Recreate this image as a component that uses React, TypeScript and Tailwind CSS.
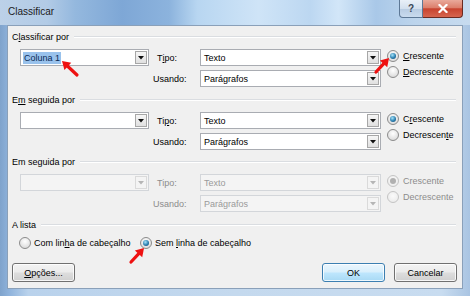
import React from "react";

function Arrow({ x1, y1, x2, y2 }: { x1: number; y1: number; x2: number; y2: number }) {
  const dx = x2 - x1;
  const dy = y2 - y1;
  const len = Math.sqrt(dx * dx + dy * dy);
  const ux = dx / len;
  const uy = dy / len;
  const hl = 8;
  const hw = 5;
  const bx = x2 - ux * hl;
  const by = y2 - uy * hl;
  const px = -uy;
  const py = ux;
  const pts = `${x2},${y2} ${bx + px * hw},${by + py * hw} ${bx - px * hw},${by - py * hw}`;
  return (
    <g>
      <line x1={x1} y1={y1} x2={bx + ux} y2={by + uy} stroke="#ee1111" strokeWidth={3.2} strokeLinecap="round" />
      <polygon points={pts} fill="#ee1111" />
    </g>
  );
}

function DropBtn({ disabled }: { disabled?: boolean }) {
  return (
    <div
      className={
        "w-[12px] my-[1px] mr-[1px] flex items-center justify-center border " +
        (disabled
          ? "border-[#dadada] bg-[#f4f4f4]"
          : "border-[#a7a7a7] bg-[linear-gradient(180deg,#f6f6f6,#e0e0e0)]")
      }
    >
      <svg width="6" height="4" viewBox="0 0 6 4">
        <polygon points="0,0 6,0 3,3.5" fill={disabled ? "#b5b5b5" : "#111"} />
      </svg>
    </div>
  );
}

function Combo({
  className,
  text,
  sel,
  disabled,
}: {
  className: string;
  text?: string;
  sel?: boolean;
  disabled?: boolean;
}) {
  return (
    <div
      className={
        "flex h-[17px] border " +
        (disabled ? "border-[#d3d6da] bg-[#f4f4f4] " : "border-[#a9acb2] bg-white ") +
        className
      }
    >
      <div className="flex-1 flex items-center pl-[2px] overflow-hidden">
        {text ? (
          sel ? (
            <span className="bg-[#99c2ec] text-[#0b2a55] px-[1px] leading-[12px]">{text}</span>
          ) : (
            <span className={"pl-[1px] " + (disabled ? "text-[#9a9a9a]" : "text-black")}>{text}</span>
          )
        ) : null}
      </div>
      <DropBtn disabled={disabled} />
    </div>
  );
}

function Radio({ checked, disabled }: { checked?: boolean; disabled?: boolean }) {
  return (
    <span
      className={
        "w-[12px] h-[12px] rounded-full border flex items-center justify-center shrink-0 " +
        (disabled
          ? "border-[#c4c4c4] bg-[radial-gradient(circle_at_50%_40%,#fafafa,#e8e8e8)]"
          : "border-[#8b8b8b] bg-[radial-gradient(circle_at_50%_35%,#ffffff,#d2d2d2)]")
      }
    >
      {checked ? (
        disabled ? (
          <span className="w-[6px] h-[6px] rounded-full bg-[#b0b0b0]" />
        ) : (
          <span className="w-[6px] h-[6px] rounded-full bg-[radial-gradient(circle_at_40%_35%,#a6e4fa,#2a7fb0_55%,#0d3f66)]" />
        )
      ) : null}
    </span>
  );
}

function RadioLabel({
  checked,
  disabled,
  children,
}: {
  checked?: boolean;
  disabled?: boolean;
  children: React.ReactNode;
}) {
  return (
    <div className="flex items-center gap-[4px] h-[12px]">
      <Radio checked={checked} disabled={disabled} />
      <span className={disabled ? "text-[#8c8c8c]" : "text-black"}>{children}</span>
    </div>
  );
}

function Header({ children, className }: { children: React.ReactNode; className: string }) {
  return (
    <div className={"flex items-center h-[12px] pl-[4px] pr-[6px] " + className}>
      <span className="whitespace-nowrap">{children}</span>
      <div className="flex-1 ml-[5px] h-[2px] border-t border-[#dadde1] border-b border-b-white" />
    </div>
  );
}

function Section({
  header,
  headerClass,
  combo1,
  tipo,
  usando,
  r1,
  r2,
  disabled,
  sel,
}: {
  header: React.ReactNode;
  headerClass: string;
  combo1?: string;
  tipo: React.ReactNode;
  usando: React.ReactNode;
  r1: React.ReactNode;
  r2: React.ReactNode;
  disabled?: boolean;
  sel?: boolean;
}) {
  const lbl = disabled ? "text-[#8c8c8c]" : "text-black";
  return (
    <div>
      <Header className={headerClass}>{header}</Header>
      <div className="flex ml-[12px] mt-[6px]">
        <div className="grid grid-cols-[129px_51px_181px] gap-y-[4px]">
          <Combo className="w-[129px]" text={combo1} sel={sel} disabled={disabled} />
          <div className={"flex items-center pl-[8px] " + lbl}>{tipo}</div>
          <Combo className="w-[181px]" text="Texto" disabled={disabled} />
          <div />
          <div className={"flex items-center pl-[4px] " + lbl}>{usando}</div>
          <Combo className="w-[181px]" text="Parágrafos" disabled={disabled} />
        </div>
        <div className="flex flex-col gap-[4px] ml-[6px] mt-[1px]">
          <RadioLabel checked disabled={disabled}>
            {r1}
          </RadioLabel>
          <RadioLabel disabled={disabled}>{r2}</RadioLabel>
        </div>
      </div>
    </div>
  );
}

function WinButton({
  children,
  primary,
  className,
}: {
  children: React.ReactNode;
  primary?: boolean;
  className: string;
}) {
  return (
    <div
      className={
        "w-[63px] h-[19px] rounded-[3px] border flex items-center justify-center text-black shadow-[inset_0_0_0_1px_rgba(255,255,255,0.8)] " +
        (primary
          ? "border-[#3c7fb1] bg-[linear-gradient(180deg,#ebf6fd_0%,#d8effc_48%,#bee6fd_52%,#a8d9f4_100%)] "
          : "border-[#707070] bg-[linear-gradient(180deg,#f3f3f3_0%,#ebebeb_48%,#dddddd_52%,#d0d0d0_100%)] ") +
        className
      }
    >
      {children}
    </div>
  );
}

export default function App() {
  return (
    <div className="relative w-[470px] h-[296px] overflow-hidden font-['Liberation_Sans',Arial,sans-serif] text-[9px] leading-[12px] text-black bg-[linear-gradient(90deg,#7fa3cc_0%,#8fb3dc_2%,#b9d2ec_6%,#c4d9ee_50%,#c8dcf0_94%,#a9c4e2_100%)]">
      {/* title bar */}
      <div className="flex h-[25px] bg-[linear-gradient(90deg,#bcd1e8_0%,#b2cbe6_10%,#94b8de_16%,#7ea7d6_26%,#8cb3dd_36%,#b8d6f1_42%,#cfe4f7_55%,#bcd7f1_66%,#d2e6f8_72%,#a9c8e8_80%,#bcd4ec_88%,#c7dbef_100%)]">
        <div className="flex-1 flex items-center pl-[8px] text-[10px] text-[#1b1b1b] pb-[1px]">Classificar</div>
        <div className="flex items-start mr-[7px]">
          <div className="w-[24px] h-[18px] rounded-bl-[4px] border border-t-0 border-[#5d7896] bg-[linear-gradient(180deg,#e9f0f8_0%,#d3e0ee_50%,#b7cbe2_51%,#c9dbee_100%)] flex items-center justify-center text-[10px] text-[#3a4656] font-bold leading-none">
            ?
          </div>
          <div className="w-[40px] h-[18px] rounded-br-[4px] border border-t-0 border-l-0 border-[#6a2a22] bg-[linear-gradient(180deg,#e9a99b_0%,#dc7f6c_45%,#c8432f_52%,#d6654f_100%)] flex items-center justify-center">
            <svg width="10" height="9" viewBox="0 0 10 9">
              <path d="M1.5 1 L8.5 8 M8.5 1 L1.5 8" stroke="#ffffff" strokeWidth="2.2" strokeLinecap="square" />
            </svg>
          </div>
        </div>
      </div>

      {/* client area */}
      <div className="mx-[7px] h-[264px] border border-[#8aa0b9] bg-[#f0f0f0] flex flex-col">
        <Section
          headerClass="mt-[5px]"
          header={
            <>
              C<span className="underline">l</span>assificar por
            </>
          }
          combo1="Coluna 1"
          sel
          tipo={
            <>
              T<span className="underline">i</span>po:
            </>
          }
          usando="Usando:"
          r1={
            <>
              <span className="underline">C</span>rescente
            </>
          }
          r2={
            <>
              <span className="underline">D</span>ecrescente
            </>
          }
        />
        <Section
          headerClass="mt-[7px]"
          header={
            <>
              E<span className="underline">m</span> seguida por
            </>
          }
          combo1=""
          tipo={
            <>
              Ti<span className="underline">p</span>o:
            </>
          }
          usando="Usando:"
          r1={
            <>
              C<span className="underline">r</span>escente
            </>
          }
          r2={
            <>
              Decrescen<span className="underline">t</span>e
            </>
          }
        />
        <Section
          headerClass="mt-[6px]"
          header="Em seguida por"
          combo1=""
          disabled
          tipo="Tipo:"
          usando="Usando:"
          r1="Crescente"
          r2="Decrescente"
        />
        <Header className="mt-[7px]">A lista</Header>
        <div className="flex mt-[6px] ml-[11px]">
          <div className="w-[121px] flex items-center gap-[3px] h-[12px]">
            <Radio />
            <span>
              Com lin<span className="underline">h</span>a de cabeçalho
            </span>
          </div>
          <div className="flex items-center gap-[3px] h-[12px]">
            <Radio checked />
            <span>
              Sem <span className="underline">l</span>inha de cabeçalho
            </span>
          </div>
        </div>
        <div className="flex mt-[14px]">
          <WinButton className="ml-[4px]">
            <span>
              <span className="underline">O</span>pções...
            </span>
          </WinButton>
          <WinButton primary className="ml-auto">
            OK
          </WinButton>
          <WinButton className="ml-[9px] mr-[5px]">Cancelar</WinButton>
        </div>
      </div>

      {/* annotation arrows */}
      <svg className="absolute inset-0 pointer-events-none" width="470" height="296">
        <Arrow x1={77} y1={75} x2={62} y2={61} />
        <Arrow x1={376} y1={72} x2={389} y2={58} />
        <Arrow x1={131} y1={262} x2={144} y2={248} />
      </svg>
    </div>
  );
}
